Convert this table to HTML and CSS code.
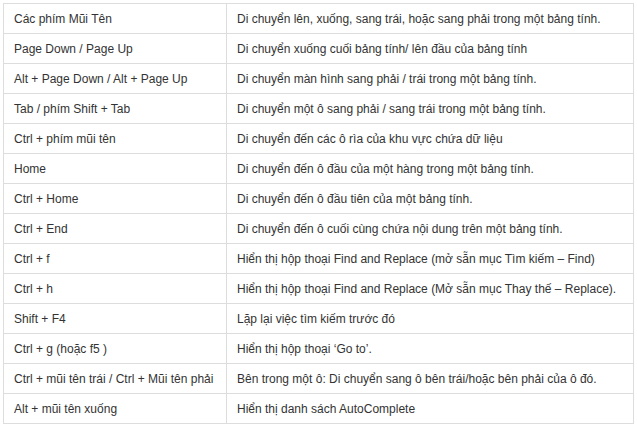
FILE: index.html
```html
<!DOCTYPE html>
<html>
<head>
<meta charset="utf-8">
<link rel="stylesheet" href="styles.css">
</head>
<body>
<table class="shortcuts">
<tbody>
<tr><td class="key">Các phím Mũi Tên</td><td>Di chuyển lên, xuống, sang trái, hoặc sang phải trong một bảng tính.</td></tr>
<tr><td class="key">Page Down / Page Up</td><td>Di chuyển xuống cuối bảng tính/ lên đầu của bảng tính</td></tr>
<tr><td class="key">Alt + Page Down / Alt + Page Up</td><td>Di chuyển màn hình sang phải / trái trong một bảng tính.</td></tr>
<tr><td class="key">Tab / phím Shift + Tab</td><td>Di chuyển một ô sang phải / sang trái trong một bảng tính.</td></tr>
<tr><td class="key">Ctrl + phím mũi tên</td><td>Di chuyển đến các ô rìa của khu vực chứa dữ liệu</td></tr>
<tr><td class="key">Home</td><td>Di chuyển đến ô đầu của một hàng trong một bảng tính.</td></tr>
<tr><td class="key">Ctrl + Home</td><td>Di chuyển đến ô đầu tiên của một bảng tính.</td></tr>
<tr><td class="key">Ctrl + End</td><td>Di chuyển đến ô cuối cùng chứa nội dung trên một bảng tính.</td></tr>
<tr><td class="key">Ctrl + f</td><td>Hiển thị hộp thoại Find and Replace (mở sẵn mục Tìm kiếm – Find)</td></tr>
<tr><td class="key">Ctrl + h</td><td>Hiển thị hộp thoại Find and Replace (Mở sẵn mục Thay thế – Replace).</td></tr>
<tr><td class="key">Shift + F4</td><td>Lặp lại việc tìm kiếm trước đó</td></tr>
<tr><td class="key">Ctrl + g (hoặc f5 )</td><td>Hiển thị hộp thoại ‘Go to’.</td></tr>
<tr><td class="key">Ctrl + mũi tên trái / Ctrl + Mũi tên phải</td><td>Bên trong một ô: Di chuyển sang ô bên trái/hoặc bên phải của ô đó.</td></tr>
<tr><td class="key">Alt + mũi tên xuống</td><td>Hiển thị danh sách AutoComplete</td></tr>
</tbody>
</table>
</body>
</html>
```

FILE: styles.css
```css
html, body {
  margin: 0;
  padding: 0;
  background: #ffffff;
}
body {
  padding: 3px 0 0 3px;
  font-family: "Liberation Sans", Arial, sans-serif;
  font-size: 12px;
  color: #333333;
}
.shortcuts {
  border-collapse: collapse;
  width: 631px;
  table-layout: fixed;
}
.shortcuts td {
  border: 1px solid #dddddd;
  height: 30px;
  padding: 0 10px;
  box-sizing: border-box;
  vertical-align: middle;
  line-height: 16px;
  white-space: nowrap;
}
.shortcuts td.key {
  width: 223px;
}
```
